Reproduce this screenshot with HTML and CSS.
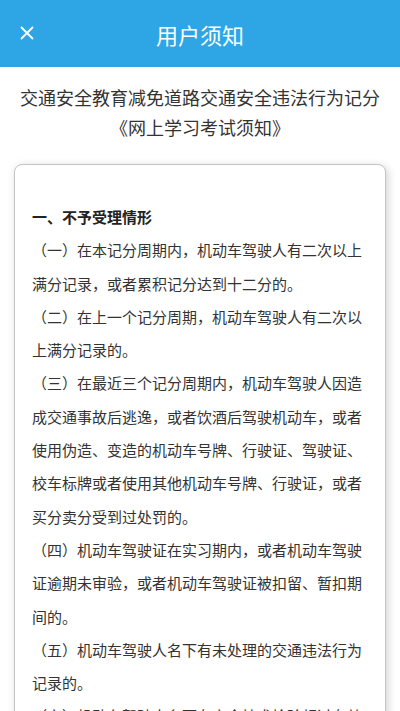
FILE: index.html
```html
<!DOCTYPE html>
<html>
    <head>
        <meta charset="utf-8">
        <title>用户须知</title>
        <meta name="viewport" content="width=device-width, initial-scale=1">
        <link rel="stylesheet" href="styles.css">
    </head>

    <body>
        <div class="topbar">
            <span class="close-btn">
                <svg width="14" height="14" viewBox="0 0 14 14">
                    <path d="M1 1 L13 13 M13 1 L1 13" stroke="#fff" stroke-width="1.8" fill="none"/>
                </svg>
            </span>
            <span class="topbar-title">用户须知</span>
        </div>

        <div class="doc-title">
            交通安全教育减免道路交通安全违法行为记分<br>
            《网上学习考试须知》
        </div>

        <div class="notice-card">
            <h3 class="notice-heading">一、不予受理情形</h3>
            <p>（一）在本记分周期内，机动车驾驶人有二次以上满分记录，或者累积记分达到十二分的。</p>
            <p>（二）在上一个记分周期，机动车驾驶人有二次以上满分记录的。</p>
            <p>（三）在最近三个记分周期内，机动车驾驶人因造成交通事故后逃逸，或者饮酒后驾驶机动车，或者使用伪造、变造的机动车号牌、行驶证、驾驶证、校车标牌或者使用其他机动车号牌、行驶证，或者买分卖分受到过处罚的。</p>
            <p>（四）机动车驾驶证在实习期内，或者机动车驾驶证逾期未审验，或者机动车驾驶证被扣留、暂扣期间的。</p>
            <p>（五）机动车驾驶人名下有未处理的交通违法行为记录的。</p>
            <p>（六）机动车驾驶人名下有安全技术检验超过有效期的机动车的。</p>
        </div>
    </body>
</html>
```

FILE: styles.css
```css
body {
    margin: 0;
    padding: 0;
    background: #fff;
    font-family: "Noto Sans CJK SC", "Noto Sans", sans-serif;
    color: #333;
    overflow: hidden;
}

.topbar {
    position: relative;
    height: 67px;
    background: #2ea6e6;
    display: flex;
    align-items: center;
    justify-content: center;
}

.close-btn {
    position: absolute;
    left: 20px;
    top: 26px;
    width: 14px;
    height: 14px;
    display: flex;
}

.topbar-title {
    color: #fff;
    font-size: 22px;
}

.doc-title {
    padding-top: 15px;
    font-size: 18px;
    line-height: 30px;
    text-align: center;
    color: #333;
}

.notice-card {
    margin: 22px 14px 0;
    padding: 35px 17px 20px;
    background: #fff;
    border: 1px solid #c4c4c4;
    border-radius: 8px;
    box-shadow: 2px 2px 8px rgba(0, 0, 0, 0.18);
    font-size: 15px;
    line-height: 33.3px;
}

.notice-heading {
    margin: 0;
    font-size: 15px;
    font-weight: bold;
    color: #222;
}

.notice-card p {
    margin: 0;
    width: 330px;
}
```
